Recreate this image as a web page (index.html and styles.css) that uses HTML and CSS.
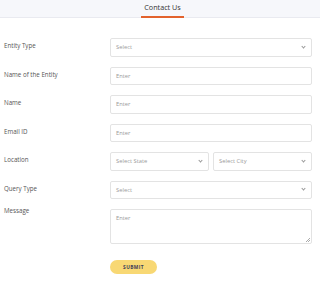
FILE: index.html
```html
<!DOCTYPE html>
<html lang="en">
<head>
  <meta charset="UTF-8">
  <meta name="viewport" content="width=device-width, initial-scale=1.0">
  <title>Contact Us</title>
  <link rel="stylesheet" href="styles.css">
</head>
<body>
  <header>
    <div class="tab">Contact Us</div>
  </header>

  <form class="contact-form">
    <label class="label">Entity Type</label>
    <div class="field select"><span>Select</span><i class="chev"></i></div>

    <label class="label">Name of the Entity</label>
    <div class="field"><span>Enter</span></div>

    <label class="label">Name</label>
    <div class="field"><span>Enter</span></div>

    <label class="label">Email ID</label>
    <div class="field"><span>Enter</span></div>

    <label class="label">Location</label>
    <div class="pair">
      <div class="field select"><span>Select State</span><i class="chev"></i></div>
      <div class="field select"><span>Select City</span><i class="chev"></i></div>
    </div>

    <label class="label">Query Type</label>
    <div class="field select"><span>Select</span><i class="chev"></i></div>

    <label class="label label-top">Message</label>
    <div class="field area"><span>Enter</span><i class="grip"></i></div>

    <div></div>
    <div class="actions">
      <button type="button" class="submit">SUBMIT</button>
    </div>
  </form>
</body>
</html>
```

FILE: styles.css
```css
* {
  margin: 0;
  padding: 0;
  box-sizing: border-box;
}

body {
  font-family: 'Open Sans', sans-serif;
  background-color: #fff;
  color: #444;
  width: 320px;
  height: 282px;
  overflow: hidden;
}

header {
  background-color: #f6f7fb;
  border-bottom: 1px solid #e9eaf0;
  height: 18px;
  display: flex;
  justify-content: center;
}

.tab {
  font-size: 7.2px;
  color: #333;
  line-height: 15px;
  padding: 0 3px;
  margin-left: 5px;
  border-bottom: 2px solid #e2622d;
  height: 18px;
}

.contact-form {
  display: grid;
  grid-template-columns: 106px 1fr;
  row-gap: 10px;
  padding: 20px 8px 0 4px;
  align-items: start;
}

.label {
  font-size: 6.2px;
  font-weight: 500;
  color: #555;
  line-height: 9px;
  padding-top: 3px;
}

.label-top {
  padding-top: 0;
  margin-top: -3px;
}

.field {
  height: 18.5px;
  border: 1px solid #e3e3e3;
  border-radius: 2px;
  display: flex;
  align-items: center;
  justify-content: space-between;
  padding: 0 6px 0 5px;
  font-size: 5.8px;
  color: #9a9a9a;
  position: relative;
}

.chev {
  width: 3px;
  height: 3px;
  border-right: 0.8px solid #999;
  border-bottom: 0.8px solid #999;
  transform: rotate(45deg);
  margin-top: -2px;
}

.pair {
  display: flex;
  gap: 4px;
}

.pair .field {
  flex: 1;
}

.area {
  height: 35px;
  align-items: flex-start;
  padding-top: 4px;
}

.grip {
  position: absolute;
  right: 1px;
  bottom: 1px;
  width: 4px;
  height: 4px;
  background: linear-gradient(135deg, transparent 45%, #aaa 45%, #aaa 55%, transparent 55%, transparent 70%, #aaa 70%, #aaa 80%, transparent 80%);
}

.actions {
  display: flex;
  padding-top: 6px;
}

.submit {
  width: 47px;
  height: 14px;
  border: none;
  border-radius: 7px;
  background-color: #f8d874;
  color: #3b3a58;
  font-family: 'Open Sans', sans-serif;
  font-size: 4.8px;
  font-weight: 700;
  letter-spacing: 0.4px;
}
```
